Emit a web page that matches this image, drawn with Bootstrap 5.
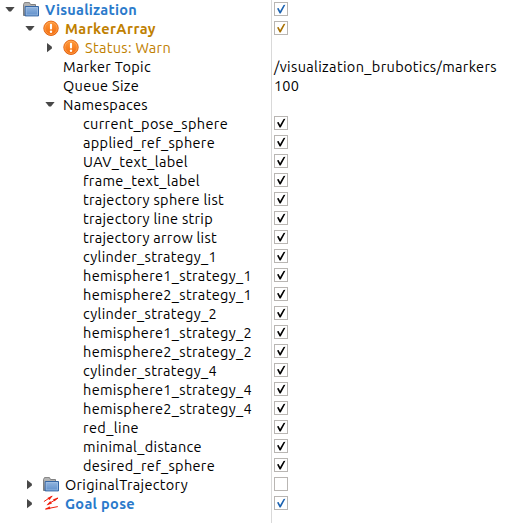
<!DOCTYPE html>
<html lang="en">
<head>
<meta charset="utf-8">
<meta name="viewport" content="width=device-width, initial-scale=1">
<title>Displays</title>
<link href="https://cdn.jsdelivr.net/npm/bootstrap@5.3.0/dist/css/bootstrap.min.css" rel="stylesheet">
<style>
body{font-family:Ubuntu,"Noto Sans","Open Sans",sans-serif;font-size:14.5px;line-height:19px;color:#000;background:#fff;overflow:hidden}
.tree{height:523px}
.names{width:271px}
.values{border-left:1px solid #d9d9d9;padding-left:2px}
.line{height:19px;white-space:nowrap}
.lvl0{padding-left:5px}
.lvl1{padding-left:25px}
.lvl2{padding-left:45px}
.leaf2{padding-left:63px}
.leaf3{padding-left:83px}
.arrow{width:10px;height:19px;flex:none}
.pic{width:16px;height:19px;margin-left:8px;margin-right:6px;flex:none}
.after-arrow{margin-left:8px}
.blue{color:#2a7acb}
.amber{color:#c08000}
.box{width:14px;height:14px;margin-top:2px;border:1px solid #b9b6b3;flex:none;color:#000;display:block}
.box svg{display:block;width:12px;height:12px}
.box.tick-blue{color:#1b62b0}
.box.tick-amber{color:#a87000}
</style>
<script src="https://cdn.jsdelivr.net/npm/bootstrap@5.3.0/dist/js/bootstrap.bundle.min.js"></script>
</head>
<body>
<svg width="0" height="0" class="position-absolute">
<defs>
<linearGradient id="gf" x1="0" y1="0" x2="0" y2="1"><stop offset="0" stop-color="#94b6df"/><stop offset="1" stop-color="#5f8fcb"/></linearGradient>
<linearGradient id="gb" x1="0" y1="0" x2="0" y2="1"><stop offset="0" stop-color="#bcbcbc"/><stop offset="1" stop-color="#858585"/></linearGradient>
<linearGradient id="gw" x1="0" y1="0" x2="0" y2="1"><stop offset="0" stop-color="#ff9a3c"/><stop offset="1" stop-color="#f26a0c"/></linearGradient>
<symbol id="down" viewBox="0 0 10 19"><path d="M.4 7h9.2L6 11.6H4z" fill="#484848"/></symbol>
<symbol id="right" viewBox="0 0 10 19"><path d="M2 5v9.2L6.9 10.4V8.8z" fill="#484848"/></symbol>
<symbol id="folder" viewBox="0 0 16 19">
<path d="M.5 15.5v-11l1-1.9h5l1 1.9h5v11z" fill="url(#gb)" stroke="#777" stroke-width=".9"/>
<path d="M2.2 6.5h13.3v9.4H2.2z" fill="url(#gf)" stroke="#3465a4" stroke-width="1"/>
<path d="M3.2 7.5h11.3v7.4H3.2z" fill="none" stroke="#a9c6e8" stroke-width=".6"/></symbol>
<symbol id="warn" viewBox="0 0 16 19">
<circle cx="8" cy="9.3" r="7.2" fill="url(#gw)" stroke="#df5c08" stroke-width=".9"/>
<circle cx="8" cy="9.3" r="6.2" fill="none" stroke="#ffb36c" stroke-width=".6"/>
<path d="M8 5.8v3.7" stroke="#fff" stroke-width="2.1" stroke-linecap="round"/><circle cx="8" cy="12.7" r="1.2" fill="#fff"/></symbol>
<symbol id="poses" viewBox="0 0 16 19">
<g stroke="#f01c08" fill="#f01c08"><path stroke-width="1" d="M.9 7.6L9 2.2M4.6 10.4L15 4.2M2.6 15L14.8 12.6"/>
<path d="M4.6 3.9L9.6 1.8 6.4 6zM3.8 11.2l3.4-4 1.6 2.2zM2 15.2l4.6-2.8.6 2.6zM10 5.6L15 3.6l-3.4 3.6z" stroke-width=".2"/></g></symbol>
<symbol id="tick" viewBox="0 0 12 12"><path d="M2 5.5L3.6 5l1.5 3L8.6 2l1.8-.2-4.7 8.7H4.6z" fill="currentColor"/></symbol>
</defs>
</svg>
<main class="tree d-flex">
<section class="names flex-shrink-0">
<div class="line d-flex lvl0 blue fw-bold"><svg class="arrow"><use href="#down"/></svg><svg class="pic"><use href="#folder"/></svg><span data-w="92">Visualization</span></div>
<div class="line d-flex lvl1 amber fw-bold"><svg class="arrow"><use href="#down"/></svg><svg class="pic"><use href="#warn"/></svg><span data-w="91">MarkerArray</span></div>
<div class="line d-flex lvl2 amber"><svg class="arrow"><use href="#right"/></svg><svg class="pic"><use href="#warn"/></svg><span data-w="86">Status: Warn</span></div>
<div class="line d-flex leaf2"><span data-w="88">Marker Topic</span></div>
<div class="line d-flex leaf2"><span data-w="76">Queue Size</span></div>
<div class="line d-flex lvl2"><svg class="arrow"><use href="#down"/></svg><span class="after-arrow" data-w="85">Namespaces</span></div>
<div class="line d-flex leaf3"><span data-w="145">current_pose_sphere</span></div>
<div class="line d-flex leaf3"><span data-w="132">applied_ref_sphere</span></div>
<div class="line d-flex leaf3"><span data-w="105">UAV_text_label</span></div>
<div class="line d-flex leaf3"><span data-w="117">frame_text_label</span></div>
<div class="line d-flex leaf3"><span data-w="141">trajectory sphere list</span></div>
<div class="line d-flex leaf3"><span data-w="130">trajectory line strip</span></div>
<div class="line d-flex leaf3"><span data-w="134">trajectory arrow list</span></div>
<div class="line d-flex leaf3"><span data-w="134">cylinder_strategy_1</span></div>
<div class="line d-flex leaf3"><span data-w="169">hemisphere1_strategy_1</span></div>
<div class="line d-flex leaf3"><span data-w="169">hemisphere2_strategy_1</span></div>
<div class="line d-flex leaf3"><span data-w="134">cylinder_strategy_2</span></div>
<div class="line d-flex leaf3"><span data-w="169">hemisphere1_strategy_2</span></div>
<div class="line d-flex leaf3"><span data-w="169">hemisphere2_strategy_2</span></div>
<div class="line d-flex leaf3"><span data-w="134">cylinder_strategy_4</span></div>
<div class="line d-flex leaf3"><span data-w="169">hemisphere1_strategy_4</span></div>
<div class="line d-flex leaf3"><span data-w="169">hemisphere2_strategy_4</span></div>
<div class="line d-flex leaf3"><span data-w="56">red_line</span></div>
<div class="line d-flex leaf3"><span data-w="119">minimal_distance</span></div>
<div class="line d-flex leaf3"><span data-w="132">desired_ref_sphere</span></div>
<div class="line d-flex lvl1"><svg class="arrow"><use href="#right"/></svg><svg class="pic"><use href="#folder"/></svg><span data-w="123">OriginalTrajectory</span></div>
<div class="line d-flex lvl1 blue fw-bold"><svg class="arrow"><use href="#right"/></svg><svg class="pic"><use href="#poses"/></svg><span data-w="70">Goal pose</span></div>
</section>
<section class="values flex-grow-1">
<div class="line d-flex"><span class="box tick-blue"><svg><use href="#tick"/></svg></span></div>
<div class="line d-flex"><span class="box tick-amber"><svg><use href="#tick"/></svg></span></div>
<div class="line d-flex"></div>
<div class="line d-flex"><span data-w="223">/visualization_brubotics/markers</span></div>
<div class="line d-flex"><span data-w="25">100</span></div>
<div class="line d-flex"></div>
<div class="line d-flex"><span class="box"><svg><use href="#tick"/></svg></span></div>
<div class="line d-flex"><span class="box"><svg><use href="#tick"/></svg></span></div>
<div class="line d-flex"><span class="box"><svg><use href="#tick"/></svg></span></div>
<div class="line d-flex"><span class="box"><svg><use href="#tick"/></svg></span></div>
<div class="line d-flex"><span class="box"><svg><use href="#tick"/></svg></span></div>
<div class="line d-flex"><span class="box"><svg><use href="#tick"/></svg></span></div>
<div class="line d-flex"><span class="box"><svg><use href="#tick"/></svg></span></div>
<div class="line d-flex"><span class="box"><svg><use href="#tick"/></svg></span></div>
<div class="line d-flex"><span class="box"><svg><use href="#tick"/></svg></span></div>
<div class="line d-flex"><span class="box"><svg><use href="#tick"/></svg></span></div>
<div class="line d-flex"><span class="box"><svg><use href="#tick"/></svg></span></div>
<div class="line d-flex"><span class="box"><svg><use href="#tick"/></svg></span></div>
<div class="line d-flex"><span class="box"><svg><use href="#tick"/></svg></span></div>
<div class="line d-flex"><span class="box"><svg><use href="#tick"/></svg></span></div>
<div class="line d-flex"><span class="box"><svg><use href="#tick"/></svg></span></div>
<div class="line d-flex"><span class="box"><svg><use href="#tick"/></svg></span></div>
<div class="line d-flex"><span class="box"><svg><use href="#tick"/></svg></span></div>
<div class="line d-flex"><span class="box"><svg><use href="#tick"/></svg></span></div>
<div class="line d-flex"><span class="box"><svg><use href="#tick"/></svg></span></div>
<div class="line d-flex"><span class="box"></span></div>
<div class="line d-flex"><span class="box tick-blue"><svg><use href="#tick"/></svg></span></div>
</section>
</main>
<script>
// Track each label out or in to its column width, in px.
document.querySelectorAll('[data-w]').forEach(el => {
  const gap = (el.dataset.w - el.getBoundingClientRect().width) / el.textContent.length;
  el.style.letterSpacing = gap.toFixed(3) + 'px';
});
</script>
</body>
</html>
